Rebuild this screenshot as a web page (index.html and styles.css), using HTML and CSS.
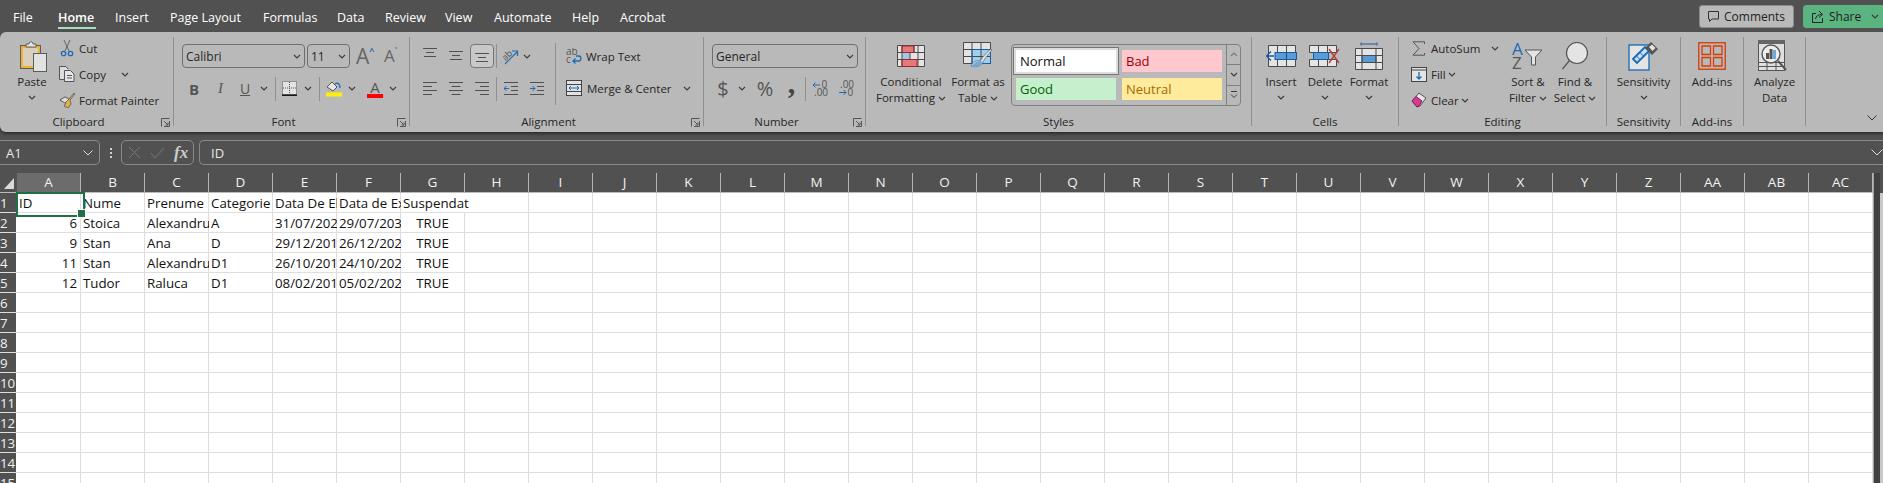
FILE: index.html
```html
<!DOCTYPE html>
<html lang="en">
<head>
<meta charset="utf-8">
<title>Excel</title>
<link rel="stylesheet" href="styles.css">
</head>
<body>
<svg class="defs" aria-hidden="true">
  <symbol id="chev" viewBox="0 0 8 5"><path d="M1 1l3 3 3-3" fill="none" stroke="#3c3c3c" stroke-width="1.2"/></symbol>
  <symbol id="launch" viewBox="0 0 9 9"><path d="M.5 8.5V.5h8M8.5 3v5.500H3M3 3l4 4M7 4.500V7H4.500" fill="none" stroke="#555" stroke-width="1"/></symbol>
  <symbol id="lines-c" viewBox="0 0 14 10"><path d="M0 .5h14M3 4.500h8M1 8.500h12" stroke="#505050" fill="none"/></symbol>
  <symbol id="lines-l" viewBox="0 0 14 14"><path d="M0 .5h14M0 4.500h9M0 8.500h14M0 12.500h9" stroke="#505050" fill="none"/></symbol>
  <symbol id="lines-m" viewBox="0 0 14 14"><path d="M0 .5h14M2.500 4.500h9M0 8.500h14M2.500 12.500h9" stroke="#505050" fill="none"/></symbol>
  <symbol id="lines-r" viewBox="0 0 14 14"><path d="M0 .5h14M5 4.500h9M0 8.500h14M5 12.500h9" stroke="#505050" fill="none"/></symbol>
</svg>

<header class="topbar">
  <nav class="tabs">
    <span>File</span><span class="active">Home</span><span>Insert</span><span>Page Layout</span><span>Formulas</span><span>Data</span><span>Review</span><span>View</span><span>Automate</span><span>Help</span><span>Acrobat</span>
  </nav>
  <div class="actions">
    <button class="btn comments"><svg width="13" height="13" viewBox="0 0 13 13"><path d="M1.500 1.500h10v7.500H5l-2.500 2.500V9h-1z" fill="none" stroke="#333"/></svg>Comments</button>
    <button class="btn share"><svg width="14" height="14" viewBox="0 0 14 14"><path d="M5 3.500H1.500v9h10V8M4.500 9c.5-3 3-4.500 6-4.500M8 1l3.500 3.500L8 7.500" fill="none" stroke="#222"/></svg>Share<span class="share-drop"><svg class="ch" width="8" height="5"><use href="#chev"/></svg></span></button>
  </div>
</header>

<section class="ribbon">
  <div class="group g-clip">
    <div class="gbody">
      <div class="big w64">
        <div class="bigicon paste-icon"><svg width="30" height="32" viewBox="0 0 30 32"><rect x="1.500" y="5.500" width="20" height="23" fill="#d8d0bd" stroke="#5c5c5c"/><rect x="3" y="7" width="17" height="20" fill="none" stroke="#efb13c" stroke-width="2"/><path d="M7 7V4h3c0-3 4-3 4 0h3v3z" fill="#e6e6e6" stroke="#5c5c5c"/><rect x="14.500" y="13.500" width="13" height="18" fill="#e2e2e2" stroke="#5c5c5c"/></svg></div>
        <div class="biglabel">Paste</div>
        <svg class="ch" width="8" height="5"><use href="#chev"/></svg>
      </div>
      <div class="stack">
        <div class="srow"><svg class="sicon" width="16" height="17" viewBox="0 0 16 17"><path d="M5 0l5 11M11 0L6 11" stroke="#666" fill="none"/><circle cx="4.500" cy="13.500" r="2.200" fill="none" stroke="#1a6db5" stroke-width="1.300"/><circle cx="11.500" cy="13.500" r="2.200" fill="none" stroke="#1a6db5" stroke-width="1.300"/></svg><span>Cut</span></div>
        <div class="srow"><svg class="sicon" width="16" height="16" viewBox="0 0 16 16"><path d="M5 13.500H.5V.5H7l2 2.500" fill="#ddd" stroke="#555"/><path d="M5.500 4.500h6l3.500 3.500v7.500H5.500z" fill="#e6e6e6" stroke="#555"/><path d="M8 9.500h5M8 12h5" stroke="#555"/></svg><span>Copy</span><svg class="ch copy-ch" width="8" height="5"><use href="#chev"/></svg></div>
        <div class="srow"><svg class="sicon" width="16" height="16" viewBox="0 0 16 16"><path d="M7 11l-6-3 5-3 4 2 5-6 1 1-5 6 1 4-3 4-4-2 2-3z" fill="#dfb24d" stroke="#555" stroke-width=".8"/><path d="M1 8l5-3 4 2-4 4z" fill="#ddd" stroke="#555" stroke-width=".8"/></svg><span>Format Painter</span></div>
      </div>
    </div>
    <div class="glabel"><span>Clipboard</span><svg class="launch" width="9" height="9"><use href="#launch"/></svg></div>
  </div>

  <div class="group g-font">
    <div class="gbody col pad8">
      <div class="row1">
        <div class="combo c-font"><span>Calibri</span><svg class="ch" width="8" height="5"><use href="#chev"/></svg></div>
        <div class="combo c-size"><span>11</span><svg class="ch" width="8" height="5"><use href="#chev"/></svg></div>
        <span class="grow-a">A<sup>^</sup></span>
        <span class="shrink-a">A<sup>˅</sup></span>
      </div>
      <div class="row2">
        <span class="slot w24 t-b">B</span>
        <span class="slot w29 t-i">I</span>
        <span class="slot w20 t-u">U</span>
        <span class="slot w18"><svg class="ch" width="8" height="5"><use href="#chev"/></svg></span>
        <span class="slot w4"><i class="vsep"></i></span>
        <span class="slot w25"><svg width="15" height="15" viewBox="0 0 15 15"><rect x=".5" y=".5" width="14" height="13" fill="#e4e4e4" stroke="#555" stroke-dasharray="1 1"/><path d="M7.500 1v12M1 7h13" stroke="#555" stroke-dasharray="1 1"/><path d="M0 14.200h15" stroke="#111" stroke-width="1.500"/></svg></span>
        <span class="slot w12"><svg class="ch" width="8" height="5"><use href="#chev"/></svg></span>
        <span class="slot w10"><i class="vsep"></i></span>
        <span class="slot w20"><svg width="16" height="17" viewBox="0 0 16 17"><path d="M1 7l5-5 5 5-4 4z" fill="#e6e6e6" stroke="#555"/><path d="M9 4c3-2 5 0 5 4" fill="none" stroke="#1a6db5" stroke-width="1.300"/><rect y="12.500" width="16" height="4" fill="#ffef00"/></svg></span>
        <span class="slot w16"><svg class="ch" width="8" height="5"><use href="#chev"/></svg></span>
        <span class="slot w30 t-color">A</span>
        <span class="slot w6"><svg class="ch" width="8" height="5"><use href="#chev"/></svg></span>
      </div>
    </div>
    <div class="glabel"><span>Font</span><svg class="launch" width="9" height="9"><use href="#launch"/></svg></div>
  </div>

  <div class="group g-align">
    <div class="gbody">
      <div class="al-left">
        <div class="row1 al-row">
          <span class="slot w26 up"><svg width="14" height="10"><use href="#lines-c"/></svg></span>
          <span class="slot w26"><svg width="14" height="10"><use href="#lines-c"/></svg></span>
          <span class="slot w26"><span class="selbox"><svg width="14" height="10"><use href="#lines-c"/></svg></span></span>
          <span class="slot w2"><i class="vsep"></i></span>
          <span class="slot w26"><svg width="17" height="17" viewBox="0 0 17 17"><text x="1" y="11" class="rot" transform="rotate(-45 5 9)">ab</text><path d="M3 16L15 4M10 3h5.500v5" fill="none" stroke="#1a6db5" stroke-width="1.200"/></svg></span>
          <span class="slot w8"><svg class="ch" width="8" height="5"><use href="#chev"/></svg></span>
        </div>
        <div class="row2 al-row">
          <span class="slot w26"><svg width="14" height="14"><use href="#lines-l"/></svg></span>
          <span class="slot w26"><svg width="14" height="14"><use href="#lines-m"/></svg></span>
          <span class="slot w26"><svg width="14" height="14"><use href="#lines-r"/></svg></span>
          <span class="slot w2"><i class="vsep"></i></span>
          <span class="slot w28"><svg width="14" height="14" viewBox="0 0 14 14"><path d="M0 .5h14M7 4.500h7M7 8.500h7M0 12.500h14" stroke="#505050" fill="none"/><path d="M5 6.500H0M2.500 4L0 6.500 2.500 9" stroke="#1a6db5" fill="none"/></svg></span>
          <span class="slot w24"><svg width="14" height="14" viewBox="0 0 14 14"><path d="M0 .5h14M7 4.500h7M7 8.500h7M0 12.500h14" stroke="#505050" fill="none"/><path d="M0 6.500h5M2.500 4L5 6.500 2.500 9" stroke="#1a6db5" fill="none"/></svg></span>
        </div>
      </div>
      <div class="al-right">
        <div class="srow wrap"><svg class="sicon" width="16" height="16" viewBox="0 0 16 16"><text x="0" y="7" class="tiny">ab</text><text x="0" y="15" class="tiny">c</text><path d="M7 13h6c2.500 0 2.500-5 0-5H10M9.500 10.500L7 13l2.500 2.500" fill="none" stroke="#1a6db5" stroke-width="1.300"/></svg><span>Wrap Text</span></div>
        <div class="srow merge"><svg class="sicon" width="16" height="16" viewBox="0 0 16 16"><rect x=".5" y=".5" width="15" height="15" fill="#e2e2e2" stroke="#444"/><path d="M.5 4.500h15M.5 11.500h15" stroke="#444"/><path d="M3 8h10M5 6L3 8l2 2M11 6l2 2-2 2" stroke="#1a6db5" fill="none"/></svg><span>Merge &amp; Center</span><svg class="ch merge-ch" width="8" height="5"><use href="#chev"/></svg></div>
      </div>
    </div>
    <div class="glabel"><span>Alignment</span><svg class="launch" width="9" height="9"><use href="#launch"/></svg></div>
  </div>

  <div class="group g-num">
    <div class="gbody col pad8">
      <div class="row1"><div class="combo c-num"><span>General</span><svg class="ch" width="8" height="5"><use href="#chev"/></svg></div></div>
      <div class="row2">
        <span class="slot w22 t-num">$</span>
        <span class="slot w16"><svg class="ch" width="8" height="5"><use href="#chev"/></svg></span>
        <span class="slot w30 t-num">%</span>
        <span class="slot w23 t-comma">,</span>
        <span class="slot w4"><i class="vsep"></i></span>
        <span class="slot w25"><svg width="16" height="17" viewBox="0 0 16 17"><path d="M8 5H1M3.500 2.500L1 5l2.500 2.500" stroke="#1a6db5" fill="none"/><text x="9.500" y="8" class="tiny">0</text><text x="2" y="16" class="tiny">.00</text></svg></span>
        <span class="slot w27"><svg width="16" height="17" viewBox="0 0 16 17"><text x="2" y="8" class="tiny">.00</text><path d="M1 12.500h7M5.500 10L8 12.500 5.500 15" stroke="#1a6db5" fill="none"/><text x="9.500" y="16" class="tiny">0</text></svg></span>
      </div>
    </div>
    <div class="glabel"><span>Number</span><svg class="launch" width="9" height="9"><use href="#launch"/></svg></div>
  </div>

  <div class="group g-styles">
    <div class="gbody pad11">
      <div class="big w68">
        <div class="bigicon"><svg width="28" height="22" viewBox="0 0 28 22"><rect x=".5" y=".5" width="27" height="21" fill="#e4e4e4"/><rect x="5" y="1" width="12" height="6.500" fill="#e57a7a"/><rect x="5" y="7.500" width="8" height="7" fill="#9cc8ea"/><rect x="5" y="14.500" width="15" height="7" fill="#e57a7a"/><path d="M.5.5h27v21H.5zM.5 7.500h27M.5 14.500h27M5 .5v21M17 .5v7M21 .5v21M13 7.500v7" fill="none" stroke="#4a4a4a"/><path d="M5 1h12v6.500H5zM5 14.500h15v7H5z" fill="none" stroke="#a4262c"/></svg></div>
        <div class="biglabel">Conditional<br>Formatting <svg class="ch" width="8" height="5"><use href="#chev"/></svg></div>
      </div>
      <div class="big w66">
        <div class="bigicon"><svg width="30" height="28" viewBox="0 0 30 28"><rect x=".5" y=".5" width="27" height="21" fill="#e4e4e4"/><rect x="9" y="7.500" width="18" height="14" fill="#a3cfee"/><path d="M.5.5h27v21H.5zM.5 7.500h27M.5 14.500h27M9 .5v21M18 .5v21" fill="none" stroke="#4a4a4a"/><path d="M9 7.500h18.500v14H9z" fill="none" stroke="#1a5c9e"/><path d="M8 24c2-5 6-6 9-5 3-5 7-9 11-12l1 1c-3 4-7 8-9 12-1 3-6 6-12 4z" fill="#dcdcdc" stroke="#555" stroke-width=".6"/><path d="M8 24c3-2 5-5 9-5l3 1c-1 3-6 6-12 4z" fill="#6da9dc"/></svg></div>
        <div class="biglabel">Format as<br>Table <svg class="ch" width="8" height="5"><use href="#chev"/></svg></div>
      </div>
      <div class="gallery">
        <div class="gal-grid">
          <div class="gs s-normal">Normal</div>
          <div class="gs s-bad">Bad</div>
          <div class="gs s-good">Good</div>
          <div class="gs s-neutral">Neutral</div>
        </div>
        <div class="gal-btns">
          <span class="gb"><svg width="8" height="5" class="flip"><use href="#chev"/></svg></span>
          <span class="gb"><svg width="8" height="5"><use href="#chev"/></svg></span>
          <span class="gb"><svg width="8" height="8" viewBox="0 0 8 8"><path d="M1 .5h6M1 3.500l3 3 3-3" stroke="#3c3c3c" fill="none"/></svg></span>
        </div>
      </div>
    </div>
    <div class="glabel"><span>Styles</span></div>
  </div>

  <div class="group g-cells">
    <div class="gbody pad7">
      <div class="big w44">
        <div class="bigicon"><svg width="32" height="22" viewBox="0 0 32 22"><rect x="3.500" y=".5" width="27" height="21" fill="#e4e4e4"/><path d="M3.500.5h27v21h-27zM12.500.5v21M21.500.5v21" fill="none" stroke="#4a4a4a"/><rect x="10" y="7.500" width="21.500" height="7" fill="#5b9bd5" stroke="#1a5c9e"/><path d="M21.500 7.500v7M9 11H2M6 6.500L1.500 11 6 15.500" fill="none" stroke="#1a5c9e" stroke-width="1.300"/></svg></div>
        <div class="biglabel">Insert</div>
        <svg class="ch" width="8" height="5"><use href="#chev"/></svg>
      </div>
      <div class="big w44">
        <div class="bigicon"><svg width="32" height="22" viewBox="0 0 32 22"><path d="M.5.500h27v7H.5zM.5 14.500h27v7H.5z" fill="#e4e4e4" stroke="#4a4a4a"/><path d="M9.500.5v7M18.500.5v7M9.500 14.500v7M18.500 14.500v7" stroke="#4a4a4a"/><rect x="4.500" y="7.500" width="15" height="7" fill="#5b9bd5" stroke="#1a5c9e"/><path d="M20 4l10 14M30 4L20 18" stroke="#b0413e" stroke-width="1.400"/></svg></div>
        <div class="biglabel">Delete</div>
        <svg class="ch" width="8" height="5"><use href="#chev"/></svg>
      </div>
      <div class="big w44">
        <div class="bigicon"><svg width="28" height="28" viewBox="0 0 28 28"><path d="M6 .5v3M22 .5v3M6 2h16" stroke="#1a5c9e" fill="none"/><rect x=".5" y="6.500" width="27" height="21" fill="#e4e4e4"/><rect x="7" y="13.500" width="14" height="7" fill="#5b9bd5" stroke="#1a5c9e"/><path d="M.5 6.500h27v21H.5zM.5 13.500h27M.5 20.500h27M7 6.500v21M21 6.500v21" fill="none" stroke="#4a4a4a"/></svg></div>
        <div class="biglabel">Format</div>
        <svg class="ch" width="8" height="5"><use href="#chev"/></svg>
      </div>
    </div>
    <div class="glabel"><span>Cells</span></div>
  </div>

  <div class="group g-edit">
    <div class="gbody">
      <div class="stack edit-stack">
        <div class="srow"><svg class="sicon" width="16" height="15" viewBox="0 0 16 15"><path d="M13.500 3V.8H2l6 6.700-6 6.700h11.500V12" fill="none" stroke="#555"/></svg><span>AutoSum</span><svg class="ch auto-ch" width="8" height="5"><use href="#chev"/></svg></div>
        <div class="srow"><svg class="sicon" width="16" height="15" viewBox="0 0 16 15"><rect x=".5" y=".5" width="15" height="14" fill="#e4e4e4" stroke="#444"/><path d="M.5 3h15" stroke="#444"/><path d="M8 5v7M5.500 9.500L8 12l2.500-2.500" fill="none" stroke="#1a6db5" stroke-width="1.300"/></svg><span>Fill</span><svg class="ch mini-ch" width="8" height="5"><use href="#chev"/></svg></div>
        <div class="srow"><svg class="sicon" width="16" height="16" viewBox="0 0 16 16"><path d="M1 9l7-8 7 5-6 8-3 1z" fill="#e6e6e6" stroke="#555"/><path d="M1 9l4-4.500 6 4.500-3 5-2 1z" fill="#d23d90" stroke="#8a1c5c"/></svg><span>Clear</span><svg class="ch mini-ch" width="8" height="5"><use href="#chev"/></svg></div>
      </div>
      <div class="big w50">
        <div class="bigicon"><svg width="32" height="28" viewBox="0 0 32 28"><text x="0" y="13" class="az-a">A</text><text x="0" y="27" class="az-z">Z</text><path d="M13 8h17l-6.500 7v8h-4v-8z" fill="#e4e4e4" stroke="#555"/></svg></div>
        <div class="biglabel">Sort &amp;<br>Filter <svg class="ch" width="8" height="5"><use href="#chev"/></svg></div>
      </div>
      <div class="big w44">
        <div class="bigicon"><svg width="26" height="28" viewBox="0 0 26 28"><circle cx="15" cy="11" r="10.500" fill="#e4e4e4" stroke="#555" stroke-width="1.200"/><path d="M7.500 18.500L.5 27" stroke="#555" stroke-width="1.200"/></svg></div>
        <div class="biglabel">Find &amp;<br>Select <svg class="ch" width="8" height="5"><use href="#chev"/></svg></div>
      </div>
    </div>
    <div class="glabel"><span>Editing</span></div>
  </div>

  <div class="group g-sens">
    <div class="gbody center">
      <div class="big">
        <div class="bigicon"><svg width="32" height="30" viewBox="0 0 32 30"><rect x="1" y="4" width="20" height="25" fill="#e4e4e4" stroke="#1468b4" stroke-width="1.300"/><path d="M5 18L17 6l4 4L9 22z" fill="#c9def2" stroke="#1468b4" stroke-width="1.800"/><path d="M8.500 15l4 4M12 11.500l4 4" stroke="#1468b4"/><path d="M17 7l6-6 7 7-6 6z" fill="#555"/><path d="M21 6l3-2.500 3.500 3.500-3 3z" fill="#e4e4e4"/></svg></div>
        <div class="biglabel">Sensitivity</div>
        <svg class="ch" width="8" height="5"><use href="#chev"/></svg>
      </div>
    </div>
    <div class="glabel"><span>Sensitivity</span></div>
  </div>

  <div class="group g-add">
    <div class="gbody center">
      <div class="big">
        <div class="bigicon"><svg width="28" height="28" viewBox="0 0 28 28"><rect x=".75" y=".75" width="26.500" height="26.500" fill="none" stroke="#d83b01" stroke-width="1.300"/><path d="M4 4h8.500v8.500H4zM15.500 4H24v8.500h-8.500zM4 15.500h8.500V24H4zM15.500 15.500H24V24h-8.500z" fill="none" stroke="#d83b01" stroke-width="1.300"/></svg></div>
        <div class="biglabel">Add-ins</div>
      </div>
    </div>
    <div class="glabel"><span>Add-ins</span></div>
  </div>

  <div class="group g-analyze">
    <div class="gbody center">
      <div class="big">
        <div class="bigicon"><svg width="32" height="32" viewBox="0 0 32 32"><rect x=".5" y=".5" width="26" height="30" fill="#e0e0e0" stroke="#555"/><rect x="0" y="0" width="27" height="4" fill="#666"/><path d="M.5 22.500h26M.5 26.500h26M9 22v9M18 22v9" stroke="#555"/><circle cx="13" cy="14" r="9" fill="#eee" stroke="#555" stroke-width="1.400"/><path d="M20 21l8 9" stroke="#555" stroke-width="2"/><rect x="8" y="13" width="3" height="6" fill="#555"/><rect x="11.500" y="9" width="3" height="10" fill="#555"/><rect x="15" y="10" width="3" height="9" fill="#6da9dc"/></svg></div>
        <div class="biglabel">Analyze<br>Data</div>
      </div>
    </div>
  </div>

  <svg class="collapse" width="10" height="6" viewBox="0 0 10 6"><path d="M.5.500L5 5 9.500.5" fill="none" stroke="#333"/></svg>
</section>

<section class="fbar">
  <div class="namebox"><span>A1</span><svg width="10" height="6" viewBox="0 0 10 6"><path d="M.5.500L5 5 9.500.5" fill="none" stroke="#ddd"/></svg></div>
  <div class="dots"><i></i><i></i><i></i></div>
  <div class="fxbtns">
    <svg width="13" height="13" viewBox="0 0 13 13"><path d="M1 1l11 11M12 1L1 12" stroke="#777"/></svg>
    <svg width="15" height="12" viewBox="0 0 15 12"><path d="M1 6l4 5 9-10" fill="none" stroke="#777"/></svg>
    <span class="fx">fx</span>
  </div>
  <div class="formula"><span>ID</span><svg width="12" height="7" viewBox="0 0 12 7"><path d="M.5.500L6 6 11.500.5" fill="none" stroke="#ddd"/></svg></div>
</section>

<main class="sheet">
  <div class="grid">
    <div class="colhead">
      <div class="corner"><svg width="10" height="11" viewBox="0 0 10 11"><path d="M10 0v11H0z" fill="#dadada"/></svg></div>
      <div class="ch-cell sel">A</div><div class="ch-cell">B</div><div class="ch-cell">C</div><div class="ch-cell">D</div><div class="ch-cell">E</div><div class="ch-cell">F</div><div class="ch-cell">G</div><div class="ch-cell">H</div><div class="ch-cell">I</div><div class="ch-cell">J</div><div class="ch-cell">K</div><div class="ch-cell">L</div><div class="ch-cell">M</div><div class="ch-cell">N</div><div class="ch-cell">O</div><div class="ch-cell">P</div><div class="ch-cell">Q</div><div class="ch-cell">R</div><div class="ch-cell">S</div><div class="ch-cell">T</div><div class="ch-cell">U</div><div class="ch-cell">V</div><div class="ch-cell">W</div><div class="ch-cell">X</div><div class="ch-cell">Y</div><div class="ch-cell">Z</div><div class="ch-cell">AA</div><div class="ch-cell">AB</div><div class="ch-cell">AC</div>
    </div>
    <div class="rows">
      <div class="row"><div class="rh">1</div><div class="cell active-cell">ID</div><div class="cell">Nume</div><div class="cell">Prenume</div><div class="cell">Categorie</div><div class="cell">Data De Eliberare</div><div class="cell">Data de Expirare</div><div class="cell over">Suspendat</div></div>
      <div class="row"><div class="rh">2</div><div class="cell num">6</div><div class="cell">Stoica</div><div class="cell">Alexandru</div><div class="cell">A</div><div class="cell">31/07/2020</div><div class="cell">29/07/2030</div><div class="cell ctr">TRUE</div></div>
      <div class="row"><div class="rh">3</div><div class="cell num">9</div><div class="cell">Stan</div><div class="cell">Ana</div><div class="cell">D</div><div class="cell">29/12/2015</div><div class="cell">26/12/2025</div><div class="cell ctr">TRUE</div></div>
      <div class="row"><div class="rh">4</div><div class="cell num">11</div><div class="cell">Stan</div><div class="cell">Alexandru</div><div class="cell">D1</div><div class="cell">26/10/2015</div><div class="cell">24/10/2025</div><div class="cell ctr">TRUE</div></div>
      <div class="row"><div class="rh">5</div><div class="cell num">12</div><div class="cell">Tudor</div><div class="cell">Raluca</div><div class="cell">D1</div><div class="cell">08/02/2015</div><div class="cell">05/02/2025</div><div class="cell ctr">TRUE</div></div>
      <div class="row"><div class="rh">6</div></div>
      <div class="row"><div class="rh">7</div></div>
      <div class="row"><div class="rh">8</div></div>
      <div class="row"><div class="rh">9</div></div>
      <div class="row"><div class="rh">10</div></div>
      <div class="row"><div class="rh">11</div></div>
      <div class="row"><div class="rh">12</div></div>
      <div class="row"><div class="rh">13</div></div>
      <div class="row"><div class="rh">14</div></div>
      <div class="row"><div class="rh">15</div></div>
    </div>
  </div>
  <aside class="vscroll"><div class="vtrack"></div><div class="vthumb"></div></aside>
</main>
</body>
</html>
```

FILE: styles.css
```css
* { box-sizing: border-box; }
html, body { margin: 0; height: 483px; overflow: hidden; }
body {
  background: #515151;
  font-family: "Open Sans", "Noto Sans", sans-serif;
  font-size: 11.5px;
  color: #262626;
}
.defs { display: none; }
svg { display: block; flex: none; }

/* top bar */
.topbar { height: 32px; display: flex; justify-content: space-between; color: #fff; }
.tabs {
  display: grid;
  grid-template-columns: 45px 57px 55px 93px 74px 48px 60px 49px 78px 48px 60px;
  margin-left: 13px;
  font-size: 12.5px;
  line-height: 35px;
  height: 32px;
  white-space: nowrap;
}
.tabs .active { font-weight: 600; position: relative; }
.tabs .active::after {
  content: ""; position: absolute; left: 0; width: 38px; top: 27px; height: 2px; background: #a8e0c0;
}
.actions { display: flex; gap: 9px; padding-top: 5px; }
.btn {
  height: 23px; display: flex; align-items: center; gap: 4px;
  font: inherit; font-size: 12px; color: #222; border-radius: 3px; padding: 0; border: 1px solid #8c8c8c;
}
.comments { width: 95px; background: #b9b9b9; padding-left: 7px; }
.share { width: 80px; background: #5bb37f; border-color: #5bb37f; padding-left: 7px; color: #1e1e1e; border-radius: 3px 0 0 3px; }
.share-drop { margin-left: auto; margin-right: 3px; }

/* ribbon */
.ribbon {
  height: 100px; background: #b9b9b9; border-radius: 6px 0 0 6px;
  box-shadow: 0 2px 3px rgba(0,0,0,.45);
  display: flex; padding-top: 5px;
}
.group { height: 89px; border-right: 1px solid #8f8f8f; display: flex; flex-direction: column; flex: none; }
.g-clip { width: 174px; } .g-font { width: 236px; } .g-align { width: 294px; } .g-num { width: 162px; }
.g-styles { width: 386px; } .g-cells { width: 147px; } .g-edit { width: 208px; } .g-sens { width: 74px; }
.g-add { width: 63px; } .g-analyze { width: 62px; }
.gbody { height: 78px; display: flex; flex: none; }
.col { flex-direction: column; }
.pad8 { padding-left: 8px; } .pad11 { padding-left: 11px; } .pad7 { padding-left: 7px; }
.center { justify-content: center; }
.glabel { height: 11px; line-height: 14px; display: flex; white-space: nowrap; text-align: center; }
.glabel span { flex: 1; }
.launch { margin: 3px 3px 0 4px; }

/* large buttons */
.big { display: flex; flex-direction: column; align-items: center; flex: none; white-space: nowrap; }
.w64 { width: 64px; } .w68 { width: 68px; } .w66 { width: 66px; } .w44 { width: 44px; } .w50 { width: 50px; }
.bigicon { height: 37px; display: flex; align-items: center; justify-content: center; }
.paste-icon { padding-left: 3px; }
.biglabel { line-height: 16px; text-align: center; }
.biglabel .ch { display: inline-block; vertical-align: 1px; }
.big > .ch { margin-top: 5px; }

/* small stacks */
.stack { margin-top: -2px; margin-left: -5px; height: 78px; }
.edit-stack { margin-left: 12px; width: 92px; flex: none; }
.srow { height: 26px; display: flex; align-items: center; white-space: nowrap; }
.sicon { margin-right: 4px; }
.copy-ch { margin-left: 15px; }
.auto-ch { margin-left: 11px; }
.mini-ch { margin-left: 2px; }

/* rows of tools */
.row1 { margin-top: 7px; height: 24px; display: flex; align-items: center; }
.row2 { margin-top: 12px; height: 17px; display: flex; align-items: center; }
.slot { display: flex; align-items: center; justify-content: center; flex: none; height: 100%; }
.w2 { width: 2px; } .w4 { width: 4px; } .w6 { width: 6px; } .w8 { width: 8px; } .w10 { width: 10px; } .w12 { width: 12px; }
.w16 { width: 16px; } .w18 { width: 18px; } .w20 { width: 20px; } .w22 { width: 22px; } .w23 { width: 23px; } .w24 { width: 24px; }
.w25 { width: 25px; } .w26 { width: 26px; } .w27 { width: 27px; } .w28 { width: 28px; } .w29 { width: 29px; } .w30 { width: 30px; }
.vsep { display: block; width: 1px; height: 24px; background: #8f8f8f; flex: none; }
.combo {
  height: 24px; border: 1px solid #6e6e6e; border-radius: 4px; display: flex; align-items: center;
  justify-content: space-between; padding: 0 3px; font-size: 12px; flex: none;
}
.c-font { width: 123px; } .c-size { width: 43px; margin-left: 2px; } .c-num { width: 146px; }
.grow-a, .shrink-a { color: #666; line-height: 24px; position: relative; }
.grow-a { margin-left: 6px; width: 28px; font-size: 21px; }
.shrink-a { font-size: 17px; }
.grow-a sup, .shrink-a sup { font-size: 9px; color: #1a6db5; position: absolute; top: -3px; font-weight: 700; line-height: 20px; }
.t-b { font-weight: 700; font-size: 15px; color: #555; }
.t-i { font-style: italic; font-size: 15px; color: #555; font-family: "Liberation Serif", serif; }
.t-u { text-decoration: underline; font-size: 14px; color: #555; }
.t-color { font-size: 15px; color: #555; line-height: 14px; flex-direction: column; }
.t-color::after { content: ""; display: block; width: 16px; height: 4px; background: #f00; flex: none; }
.t-num { font-size: 20px; color: #555; }
.t-comma { font-size: 30px; font-weight: 700; color: #444; font-family: "Liberation Serif", serif; padding-bottom: 12px; }
.tiny { font-size: 10px; fill: #555; font-family: "Open Sans", sans-serif; }
.rot { font-size: 9px; fill: #555; font-family: "Open Sans", sans-serif; }
.az-a { font-size: 17px; fill: #1a6db5; font-family: "Open Sans", sans-serif; }
.az-z { font-size: 17px; fill: #555; font-family: "Open Sans", sans-serif; }

/* alignment */
.al-left { width: 145px; padding-left: 7px; flex: none; }
.al-row { display: flex; }
.selbox { width: 24px; height: 24px; border: 1px solid #777; border-radius: 4px; background: #c8c8c8; display: flex; align-items: flex-end; justify-content: center; padding-bottom: 4px; }
.up { padding-bottom: 6px; }
.al-right { border-left: 1px solid #8f8f8f; height: 62px; margin-top: 6px; padding-left: 10px; }
.wrap { height: 26px; }
.merge { margin-top: 6px; height: 26px; }
.merge .sicon { margin-right: 5px; }
.merge-ch { margin-left: 11px; }

/* styles gallery */
.gallery {
  width: 230px; height: 62px; margin-top: 7px; flex: none;
  border: 1px solid #808080; border-radius: 4px; display: flex;
}
.gal-grid {
  width: 214px; padding: 5px 0 0 4px; display: grid;
  grid-template-columns: 100px 100px; grid-auto-rows: 22px; gap: 6px;
}
.gs { font-size: 13px; line-height: 22px; padding-left: 4px; }
.s-normal { background: #fff; color: #111; box-shadow: 0 0 0 2px #dcdcdc, 0 0 0 3px #757575; }
.s-bad { background: #ffc7ce; color: #9c0006; }
.s-good { background: #c6efce; color: #006100; }
.s-neutral { background: #ffeb9c; color: #a86800; }
.gal-btns { flex: 1; border-left: 1px solid #808080; display: flex; flex-direction: column; }
.gb { flex: 1; display: flex; align-items: center; justify-content: center; border-bottom: 1px solid #808080; }
.gb:last-child { border-bottom: 0; }
.flip { transform: scaleY(-1); opacity: .5; }

.collapse { align-self: flex-end; margin: 0 6px 11px auto; }

/* formula bar */
.fbar { height: 25px; margin-top: 8px; display: flex; color: #e8e8e8; font-size: 13px; }
.namebox, .fxbtns, .formula { border: 1px solid #8a8a8a; display: flex; align-items: center; }
.namebox { width: 100px; border-radius: 0 5px 5px 0; border-left: 0; padding: 0 6px; justify-content: space-between; }
.dots { width: 21px; display: flex; flex-direction: column; align-items: center; justify-content: center; gap: 2px; }
.dots i { width: 2px; height: 2px; background: #d0d0d0; display: block; }
.fxbtns { width: 73px; border-radius: 5px; padding-left: 6px; gap: 9px; }
.fx { font-family: "Liberation Serif", serif; font-style: italic; font-weight: 700; font-size: 17px; line-height: 20px; color: #ccc; }
.formula { flex: 1; margin-left: 5px; border-radius: 5px 0 0 5px; border-right: 0; padding: 0 0 0 11px; justify-content: space-between; }

/* sheet */
.sheet { margin-top: 8px; display: flex; height: 310px; }
.grid { width: 1873px; flex: none; }
.colhead { height: 20px; display: flex; }
.corner { width: 17px; display: flex; padding: 5px 0 0 4px; flex: none; border-bottom: 1px solid #bbb; }
.ch-cell {
  width: 64px; flex: none; color: #f2f2f2; font-size: 13.5px; line-height: 19px; text-align: center;
  border-right: 1px solid #b5b5b5; border-bottom: 1px solid #bbb;
}
.ch-cell.sel { background: #6c6c6c; }
.rows {
  background-color: #fff;
  background-image: linear-gradient(to left, #dedede 1px, transparent 1px);
  background-size: 64px 100%; background-position: 17px 0;
  color: #111;
}
.row { height: 20px; display: flex; border-bottom: 1px solid #dedede; font-size: 13.3px; line-height: 21px; }
.rh { width: 17px; flex: none; height: 19px; color: #f2f2f2; background: linear-gradient(to right, #515151 16px, #fff 16px); white-space: nowrap; overflow: hidden; }
.cell { width: 64px; flex: none; height: 19px; padding-left: 2px; white-space: nowrap; overflow: hidden; }
.num { text-align: right; padding-right: 4px; }
.ctr { text-align: center; padding-left: 0; padding-right: 1px; }
.over { overflow: visible; background: #fff; }
.active-cell { position: relative; overflow: visible; }
.active-cell::before {
  content: ""; position: absolute; left: -1px; top: -1px; width: 65px; height: 21px; border: 2px solid #1f7145;
}
.active-cell::after {
  content: ""; position: absolute; left: 60px; top: 16px; width: 7px; height: 7px; background: #1f7145; border: 1px solid #fff;
}
.vscroll { flex: 1; display: flex; border-left: 1px solid #a0a0a0; }
.vtrack { width: 6px; background: #404040; flex: none; }
.vthumb { flex: 1; background: #c9c9c9; margin-top: 20px; }
```
